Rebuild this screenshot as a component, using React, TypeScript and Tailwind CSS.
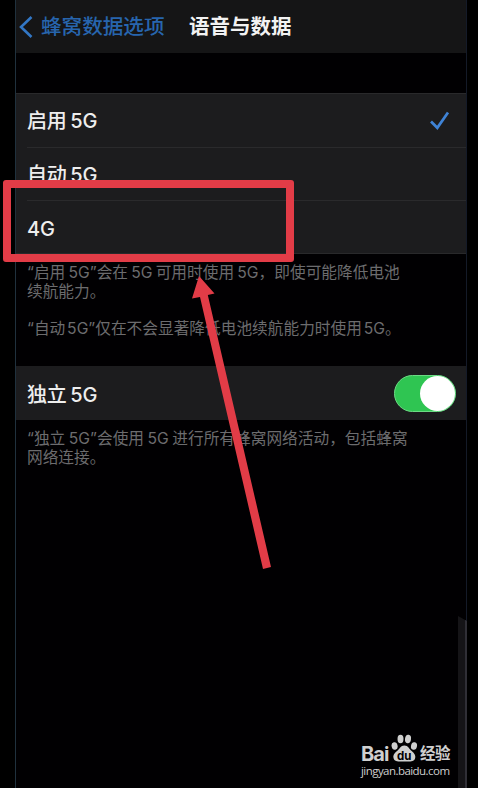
import React from 'react';

interface OptionRowProps {
  label: string;
  selected?: boolean;
  last?: boolean;
}

function OptionRow({ label, selected, last }: OptionRowProps) {
  return (
    <div className="pl-[11px]">
      <div
        className={`flex items-center justify-between pt-0.5 pr-[15px] ${
          last ? 'h-[53px]' : 'h-[53.5px] border-b border-[#2a2a2c]'
        }`}
      >
        <span className="text-[20px] leading-6 font-medium tracking-[-0.2px] text-[#eeeeee] [word-spacing:-1.4px]">
          {label}
        </span>
        {selected && (
          <svg width="22" height="20" viewBox="0 0 22 20" fill="none">
            <path d="M2 10.5 L8.3 16.8 L19 1.5" stroke="#3f83d6" strokeWidth="2.7" />
          </svg>
        )}
      </div>
    </div>
  );
}

function Watermark() {
  return (
    <div className="absolute right-[28px] bottom-[9px] flex w-[89px] flex-col text-[#cfcfcf]">
      <div className="flex h-[29px] items-end justify-between">
        <span className="text-[20px] leading-[18px] font-bold tracking-[-0.9px]">Bai</span>
        <svg width="27" height="29" viewBox="0 0 27 29" fill="currentColor">
          <ellipse cx="3.6" cy="12" rx="3" ry="3.8" transform="rotate(-12 3.6 12)" />
          <ellipse cx="9.5" cy="5" rx="3" ry="4.2" />
          <ellipse cx="17" cy="5" rx="3" ry="4.2" transform="rotate(8 17 5)" />
          <ellipse cx="23" cy="12" rx="3" ry="3.8" transform="rotate(12 23 12)" />
          <path d="M13.3 11.5 C9.5 11.5 8.7 15 6 17 C3 19.3 1.8 21.5 2.5 24 C3.5 28 7.5 27.5 13.3 27.5 C19 27.5 23.3 28 24.2 24 C24.8 21.5 23.5 19.3 20.7 17 C18 15 17.5 11.5 13.3 11.5 Z" />
          <text x="13.3" y="25.5" fontSize="11.5" fontWeight="700" textAnchor="middle" fill="#010002">
            du
          </text>
        </svg>
        <span className="text-[15.5px] leading-[18px] font-bold tracking-[-0.5px]">经验</span>
      </div>
      <span className="font-['Open_Sans',sans-serif] text-[11.5px] leading-4 font-medium tracking-[-0.55px] whitespace-nowrap">
        jingyan.baidu.com
      </span>
    </div>
  );
}

export default function App() {
  return (
    <div className="relative h-[788px] w-[478px] overflow-hidden bg-black pr-[11px] pl-[15px] font-['Inter','Noto_Sans_CJK_SC',sans-serif]">
      <div className="h-full border-r border-l border-r-[#141a28] border-l-[#20313d] bg-[#010002]">
        <header className="flex h-[53px] items-center bg-[#151516] pl-[3px]">
          <svg width="14" height="24" viewBox="0 0 14 24" fill="none">
            <path d="M12.5 2 L2 12 L12.5 22" stroke="#3277c5" strokeWidth="2.6" />
          </svg>
          <span className="ml-[8px] w-[148px] text-[20.6px] leading-6 font-medium whitespace-nowrap text-[#2765ae]">
            蜂窝数据选项
          </span>
          <h1 className="text-[20.5px] leading-6 font-bold whitespace-nowrap text-[#f2f2f2]">语音与数据</h1>
        </header>

        <section className="mt-10 h-[161px] border-t border-b border-[#29292b] bg-[#1c1c1e]">
          <OptionRow label="启用 5G" selected />
          <OptionRow label="自动 5G" />
          <OptionRow label="4G" last />
        </section>

        <div className="h-[112px] pt-[9px] pl-[11px] text-[15.7px] leading-[19px] whitespace-nowrap text-[#6c6c6e] [word-spacing:-1.2px]">
          <p>“启用 5G”会在 5G 可用时使用 5G，即使可能降低电池</p>
          <p>续航能力。</p>
          <p className="mt-[18px] [word-spacing:-2.6px]">“自动 5G”仅在不会显著降低电池续航能力时使用 5G。</p>
        </div>

        <section className="flex h-[54px] items-center justify-between bg-[#1c1c1e] pr-[10px] pl-[11px]">
          <span className="pt-[3px] text-[20px] leading-6 font-medium tracking-[-0.2px] text-[#eeeeee] [word-spacing:-1.4px]">
            独立 5G
          </span>
          <div className="flex h-[37px] w-[62px] items-center justify-end rounded-full border border-[#6bdb84] bg-[#2fc552]">
            <div className="h-[35px] w-[35px] rounded-full bg-white" />
          </div>
        </section>

        <div className="pt-[9px] pl-[11px] text-[15.7px] leading-[19px] whitespace-nowrap text-[#6c6c6e] [word-spacing:-0.9px]">
          <p>“独立 5G”会使用 5G 进行所有蜂窝网络活动，包括蜂窝</p>
          <p>网络连接。</p>
        </div>
      </div>

      {/* side button on the frame */}
      <div className="absolute right-[11px] bottom-0 h-[172px] w-[9px] border-r-2 border-[#302f36] bg-[#151417] [clip-path:polygon(0_0,100%_5px,100%_100%,0_100%)]" />

      {/* highlight */}
      <div className="absolute top-[180px] left-[3px] h-[82px] w-[291px] rounded-[3px] border-8 border-[#e23c47]" />
      <svg className="absolute top-[270px] left-[185px]" width="95" height="305" viewBox="185 270 95 305" fill="#e23c47">
        <path d="M199 276 L214.5 293.5 L207.8 295 L271 567 L263 569 L200 297 L192 298.5 Z" />
      </svg>

      <Watermark />
    </div>
  );
}
